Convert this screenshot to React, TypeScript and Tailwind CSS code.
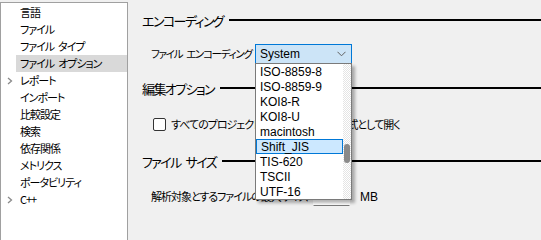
import React from "react";

const navItems = [
  { label: "言語" },
  { label: "ファイル" },
  { label: "ファイル タイプ" },
  { label: "ファイル オプション", active: true },
  { label: "レポート", arrow: true },
  { label: "インポート" },
  { label: "比較設定" },
  { label: "検索" },
  { label: "依存関係" },
  { label: "メトリクス" },
  { label: "ポータビリティ" },
  { label: "C++", arrow: true },
];

const encodings = [
  "ISO-8859-8",
  "ISO-8859-9",
  "KOI8-R",
  "KOI8-U",
  "macintosh",
  "Shift_JIS",
  "TIS-620",
  "TSCII",
  "UTF-16",
];

// tight tracking eats normal spaces, so words get a fixed gap
const Words = ({ text, gap = "w-[4px]" }: { text: string; gap?: string }) => (
  <>
    {text.split(" ").map((w, i) => (
      <React.Fragment key={i}>
        {i > 0 && <span className={"inline-block " + gap} />}
        {w}
      </React.Fragment>
    ))}
  </>
);

const Heading = ({ children, className }: { children: string; className?: string }) => (
  <div className={"flex h-[18px] items-center gap-[6px] " + (className ?? "")}>
    <span className="whitespace-nowrap text-[13px] leading-none tracking-[-1.6px] text-black">
      <Words text={children} gap="w-[5px]" />
    </span>
    <div className="h-[2px] flex-1 bg-black" />
  </div>
);

const Chevron = () => (
  <svg width="8" height="8" viewBox="0 0 8 8" className="text-[#8a8a8a]">
    <path d="M2 1 L5.5 4 L2 7" fill="none" stroke="currentColor" strokeWidth="1.3" />
  </svg>
);

export default function App() {
  return (
    <div
      className="flex h-[240px] w-[541px] overflow-hidden bg-[#f0f0f0] text-[11px] tracking-[-1px] text-black [font-feature-settings:'palt']"
      style={{ fontFamily: '"Noto Sans CJK JP", "Liberation Sans", sans-serif' }}
    >
      {/* SIDEBAR */}
      <div className="mt-[2px] w-[128px] shrink-0 border border-b-0 border-[#a0a0a0] bg-white pt-[1px]">
        {navItems.map((item) => (
          <div key={item.label} className="flex h-[17px] items-center">
            <div className="flex w-[15px] justify-center pl-[2px]">{item.arrow && <Chevron />}</div>
            <div
              className={
                "flex h-full flex-1 items-center whitespace-nowrap pl-[4px] leading-none " +
                (item.active ? "bg-[#d9d9d9]" : "")
              }
            >
              <Words text={item.label} />
            </div>
          </div>
        ))}
      </div>

      {/* CONTENT */}
      <div className="flex-1 pl-[14px] pt-[11px]">
        <Heading>エンコーディング</Heading>

        <div className="ml-[9px] mt-[15px] flex h-[20px] items-center">
          <span className="w-[104px] whitespace-nowrap text-[10.5px] leading-none tracking-[-1.3px]">
            <Words text="ファイル エンコーディング" />
          </span>
          <div className="relative z-10 tracking-normal">
            <div className="flex h-[20px] w-[97px] items-center justify-between border border-[#0078d7] bg-[#cce4f7] pl-[4px] pr-[5px]">
              <span className="font-['Liberation_Sans'] text-[12px] leading-none">System</span>
              <svg width="9" height="6" viewBox="0 0 9 6">
                <path d="M0.5 0.8 L4.5 4.8 L8.5 0.8" fill="none" stroke="#606060" strokeWidth="1" />
              </svg>
            </div>
            <div className="absolute left-0 top-[19px] flex h-[137px] w-[97px] border border-[#7a7a7a] bg-white shadow-[3px_3px_3px_rgba(0,0,0,0.3)]">
              <div className="flex-1">
                {encodings.map((enc) => (
                  <div
                    key={enc}
                    className={
                      "flex h-[15px] items-center pl-[4px] font-['Liberation_Sans'] text-[12px] font-medium leading-none " +
                      (enc === "Shift_JIS" ? "border border-[#0078d7] bg-[#cce8ff] pl-[3px]" : "")
                    }
                  >
                    {enc}
                  </div>
                ))}
              </div>
              <div className="relative w-[8px] bg-[repeating-conic-gradient(#e4e4e4_0_25%,#ffffff_0_50%)] bg-[length:2px_2px]">
                <div className="absolute left-[1px] top-[80px] h-[19px] w-[6px] rounded-full bg-[#8a8a8a]" />
              </div>
            </div>
          </div>
        </div>

        <Heading className="mt-[15px]">編集オプション</Heading>

        <div className="ml-[11px] mt-[21px] flex h-[13px] items-center gap-[5px]">
          <div className="h-[13px] w-[13px] rounded-[2px] border border-[#333] bg-white" />
          <span className="whitespace-nowrap leading-none">
            <Words text="すべてのプロジェクト ファイルを UTF-8形式として開く" />
          </span>
        </div>

        <Heading className="mt-[21px]">ファイル サイズ</Heading>

        <div className="ml-[9px] mt-[17px] flex h-[19px] items-center">
          <span className="w-[162px] whitespace-nowrap leading-none">解析対象とするファイルの最大サイズ</span>
          <div className="flex h-[19px] w-[37px] items-center border border-b-[#7a7a7a] border-l-transparent border-r-transparent border-t-transparent bg-white pl-[3px] font-['Liberation_Sans'] tracking-normal">
            10
          </div>
          <span className="ml-[10px] font-['Liberation_Sans'] text-[12px] leading-none tracking-normal">MB</span>
        </div>
      </div>
    </div>
  );
}
